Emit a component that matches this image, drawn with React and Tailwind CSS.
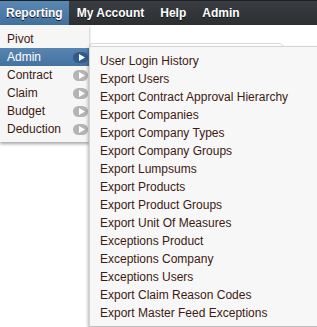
import React from 'react';

const topItems = ['Reporting', 'My Account', 'Help', 'Admin'];
const reportingItems = [
  { label: 'Pivot' },
  { label: 'Admin', sub: true, active: true },
  { label: 'Contract', sub: true },
  { label: 'Claim', sub: true },
  { label: 'Budget', sub: true },
  { label: 'Deduction', sub: true },
];
const adminItems = [
  'User Login History',
  'Export Users',
  'Export Contract Approval Hierarchy',
  'Export Companies',
  'Export Company Types',
  'Export Company Groups',
  'Export Lumpsums',
  'Export Products',
  'Export Product Groups',
  'Export Unit Of Measures',
  'Exceptions Product',
  'Exceptions Company',
  'Exceptions Users',
  'Export Claim Reason Codes',
  'Export Master Feed Exceptions',
];

const Arrow = ({ active }) => (
  <span
    className={`flex items-center justify-center w-[15px] h-[11px] rounded-full ${
      active ? 'bg-[#2f5c8a]' : 'bg-[#b4b4b4]'
    }`}
  >
    <svg width="6" height="7" viewBox="0 0 6 7" className="ml-[2px]">
      <path d="M0 0 L6 3.5 L0 7 Z" fill="#ffffff" />
    </svg>
  </span>
);

export default function App() {
  return (
    <div className="relative w-[317px] h-[327px] overflow-hidden bg-white font-['Liberation_Sans',Arial,sans-serif] text-[12px]">
      {/* Top nav */}
      <nav className="flex h-[25px] bg-gradient-to-b from-[#3a3e42] to-[#2b2f32] border-t border-[#1e2124]">
        {topItems.map((item, i) => (
          <div
            key={item}
            className={`flex items-center font-bold text-white [text-shadow:0_1px_0_#111] ${
              i === 0
                ? 'px-[6px] bg-gradient-to-b from-[#5a88b5] to-[#41709f]'
                : 'px-2'
            }`}
          >
            {item}
          </div>
        ))}
      </nav>

      {/* Page content behind menus */}
      <div className="flex items-center gap-[6px] pl-[88px] pt-[18px]">
        <div className="w-[196px] h-[20px] rounded-[5px] border border-[#d9d9d9] bg-white" />
        <div className="w-[8px] h-[8px] rounded-full border-2 border-[#c87a2a] border-t-[#2a4f7a]" />
      </div>

      {/* Reporting dropdown */}
      <ul className="absolute left-0 top-[25px] w-[89px] pt-[5px] pb-[4px] bg-[#f6f6f6] shadow-[0_2px_3px_rgba(0,0,0,0.35)]">
        {reportingItems.map((it) => (
          <li
            key={it.label}
            className={`flex items-center justify-between h-[18px] pl-[7px] pr-[1px] ${
              it.active
                ? 'bg-gradient-to-b from-[#5784b1] to-[#45739f] text-white'
                : 'text-[#3d1a12]'
            }`}
          >
            <span>{it.label}</span>
            {it.sub && <Arrow active={it.active} />}
          </li>
        ))}
      </ul>

      {/* Admin submenu */}
      <ul className="absolute left-[89px] top-[46px] w-[240px] pt-[5px] pb-[4px] bg-[#f7f7f7] border-t border-l border-[#d4d4d4] shadow-[-1px_2px_3px_rgba(0,0,0,0.3)]">
        {adminItems.map((label) => (
          <li key={label} className="flex items-center h-[18px] pl-[10px] text-[#3d1a12]">
            {label}
          </li>
        ))}
      </ul>
    </div>
  );
}
